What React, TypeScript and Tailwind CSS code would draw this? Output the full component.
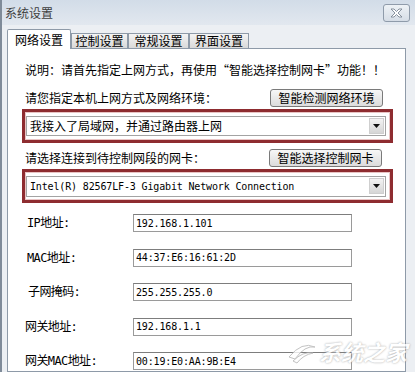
import React from 'react';

const cjk = "font-['Noto_Sans_CJK_SC',sans-serif]";
const mono = "font-['DejaVu_Sans_Mono','Noto_Sans_CJK_SC',monospace]";

const Tab = ({ label, w, active }: { label: string; w: string; active?: boolean }) =>
  active ? (
    <div
      className={`${w} relative z-10 -mb-px flex h-[20px] items-center justify-center rounded-t-[2px] border border-b-0 border-[#8e9aa8] bg-white text-[12px] text-black`}
    >
      {label}
    </div>
  ) : (
    <div
      className={`${w} flex h-[15px] items-center justify-center border border-b-0 border-[#8e9aa8] bg-gradient-to-b from-[#f4f4f4] to-[#d9d9d9] text-[12px] text-black`}
    >
      {label}
    </div>
  );

const Button = ({ children }: { children: React.ReactNode }) => (
  <button
    type="button"
    className="flex h-[18px] w-[113px] items-center justify-center rounded-[3px] border border-[#7a7a7a] bg-gradient-to-b from-[#f7f7f7] to-[#dcdcdc] text-[12px] leading-none text-black"
  >
    {children}
  </button>
);

const Combo = ({ children, h, font }: { children: React.ReactNode; h: string; font: string }) => (
  <div className={`flex ${h} w-[360px] items-center border border-[#a3a3a3] bg-white pr-[1px] pl-[3px]`}>
    <div className={`flex-1 ${font} text-black`}>{children}</div>
    <div className="flex h-[16px] w-[15px] items-center justify-center border border-[#cfcfcf] bg-gradient-to-b from-[#f3f3f3] to-[#d6d6d6]">
      <svg width="7" height="4" viewBox="0 0 7 4">
        <path d="M0 0h7L3.5 4z" fill="#111" />
      </svg>
    </div>
  </div>
);

const RedBox = ({ children }: { children: React.ReactNode }) => (
  <div className="mt-[2px] flex h-[34px] w-[371px] items-center border-[3px] border-[#8e2c30] pl-[1px] shadow-[inset_0_0_0_1px_#e9c4c4]">
    {children}
  </div>
);

const rows = [
  { label: 'IP地址:', value: '192.168.1.101', pl: 'pl-[5px]' },
  { label: 'MAC地址:', value: '44:37:E6:16:61:2D', pl: 'pl-[5px]' },
  { label: '子网掩码:', value: '255.255.255.0', pl: 'pl-[6px]' },
  { label: '网关地址:', value: '192.168.1.1', pl: 'pl-[3px]' },
  { label: '网关MAC地址:', value: '00:19:E0:AA:9B:E4', pl: 'pl-[3px]' },
];

const App: React.FC = () => (
  <div className={`relative flex h-[372px] w-[415px] flex-col overflow-hidden border-l-2 border-[#7f8b99] bg-[#eceff3] ${cjk}`}>
    <div className="flex h-[25px] shrink-0 items-center justify-between bg-gradient-to-b from-[#d2dce8] to-[#e2e8ef] pr-[5px] pl-[3px]">
      <span className="text-[12px] text-[#3e3e3e]">系统设置</span>
      <div className="mt-[1px] flex h-[18px] w-[27px] items-center justify-center rounded-[3px] border border-[#8f9baa] bg-gradient-to-b from-[#eef2f6] to-[#d6dde6]">
        <svg width="13" height="10" viewBox="0 0 13 10">
          <path
            d="M1 1h3l2.5 2.5L9 1h3L8 5l4 4H9L6.5 6.5 4 9H1l4-4z"
            fill="#fff"
            stroke="#7c8794"
            strokeWidth="0.9"
            strokeLinejoin="round"
          />
        </svg>
      </div>
    </div>

    <div className="flex flex-1 flex-col pt-[4px] pr-[9px] pl-[5px]">
      <div className="flex h-[19px] items-end">
        <Tab label="网络设置" w="w-[64px]" active />
        <Tab label="控制设置" w="w-[57px]" />
        <Tab label="常规设置" w="w-[61px]" />
        <Tab label="界面设置" w="w-[60px]" />
      </div>

      <div className="flex-1 border border-[#8e9aa8] bg-white pt-[13px] pl-[14px]">
        <p className="ml-[3px] text-[12px] leading-[16px] text-black">
          说明：请首先指定上网方式，再使用“智能选择控制网卡”功能！！
        </p>

        <div className="mt-[11px] flex w-[361px] items-center justify-between">
          <span className="ml-[3px] text-[12px] leading-[16px] text-black">请您指定本机上网方式及网络环境：</span>
          <Button>智能检测网络环境</Button>
        </div>

        <RedBox>
          <Combo h="h-[20px]" font="text-[12px] leading-[16px]">
            我接入了局域网，并通过路由器上网
          </Combo>
        </RedBox>

        <div className="mt-[6px] flex w-[360px] items-center justify-between">
          <span className="ml-[3px] text-[12px] leading-[16px] text-black">请选择连接到待控制网段的网卡：</span>
          <Button>智能选择控制网卡</Button>
        </div>

        <RedBox>
          <Combo h="h-[21px]" font={`${mono} text-[10px] tracking-[-0.15px]`}>
            Intel(R) 82567LF-3 Gigabit Network Connection
          </Combo>
        </RedBox>

        <div className="mt-[11px] flex flex-col gap-[16.5px]">
          {rows.map((r) => (
            <div key={r.label} className="flex h-[18px] items-center">
              <span className={`w-[111px] ${r.pl} ${mono} text-[12px] tracking-[-0.6px] text-black`}>{r.label}</span>
              <div className="flex h-[18px] w-[219px] items-center border border-[#9a9a9a] border-t-[#7d7d7d] bg-white pl-[2px]">
                <span className={`${mono} text-[10px] tracking-[-0.15px] text-black`}>{r.value}</span>
              </div>
            </div>
          ))}
        </div>
      </div>
    </div>

    <div className="pointer-events-none absolute right-[8px] bottom-[4px] flex items-center gap-[2px] opacity-80">
      <svg width="30" height="26" viewBox="0 0 30 26">
        <path d="M2 18 Q15 2 28 8 Q18 6 8 20z" fill="#fff" stroke="#b5b5b5" strokeWidth="1" />
        <path d="M6 22 Q16 12 26 14 Q16 16 10 24z" fill="#fff" stroke="#b5b5b5" strokeWidth="1" />
      </svg>
      <span className="text-[22px] font-bold italic text-white [text-shadow:0_0_2px_#8a8a8a]">系统之家</span>
    </div>
  </div>
);

export default App;
